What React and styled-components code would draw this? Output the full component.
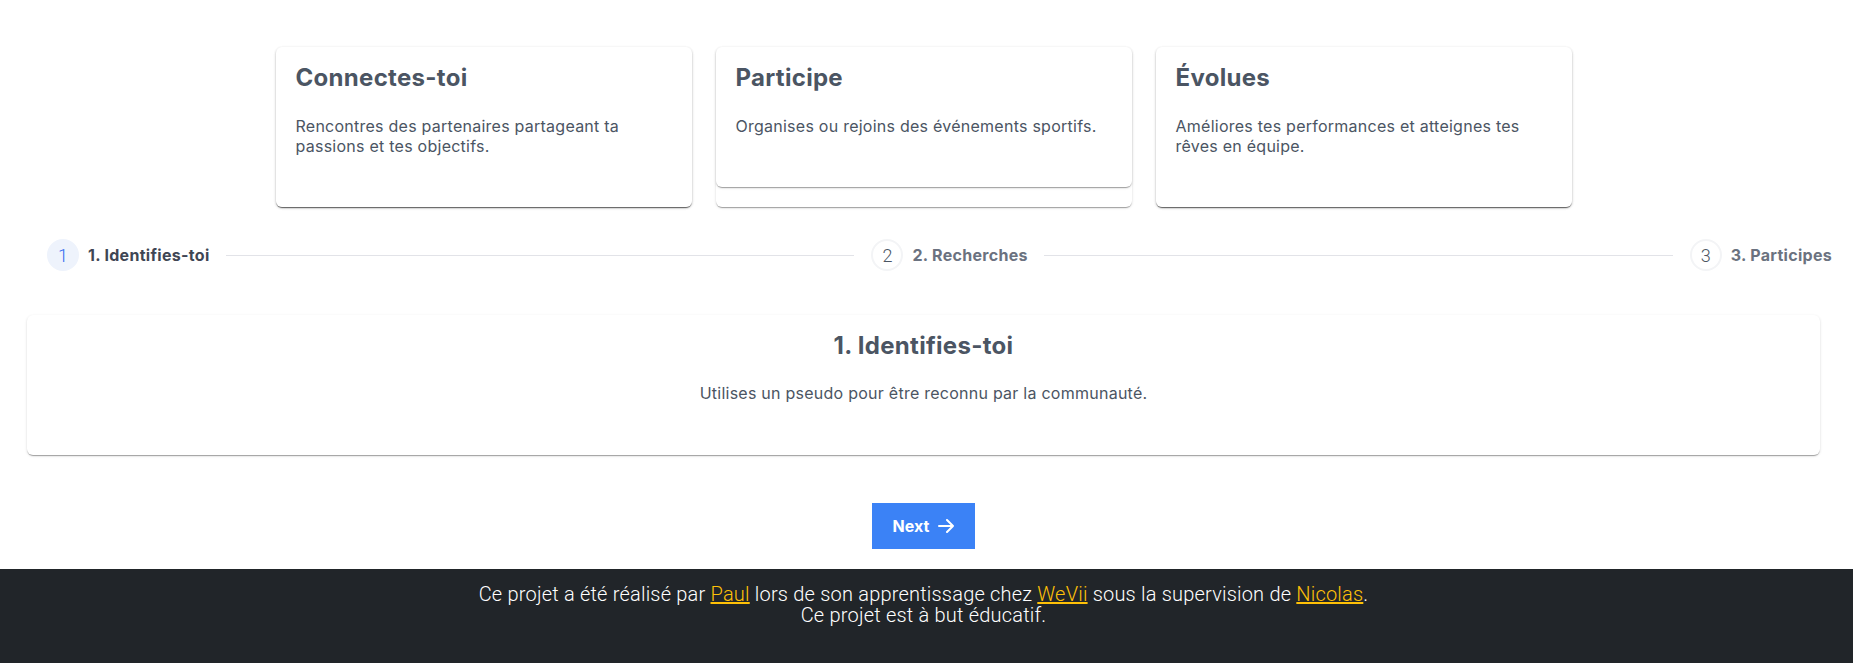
import React from "react";
import styled, { createGlobalStyle } from "styled-components";

const GlobalStyle = createGlobalStyle`
    html, body {
        margin: 0;
        padding: 0;
        background: #ffffff;
    }
    body {
        font-family: Inter, "Noto Sans", sans-serif;
        color: #4b5563;
    }
`;

const Page = styled.div`
    min-height: 100vh;
    display: flex;
    flex-direction: column;
`;

const Main = styled.main`
    flex: 1;
    padding: 47px 33px 20px 27px;
    display: flex;
    flex-direction: column;
`;

const CardsRow = styled.div`
    display: flex;
    justify-content: center;
    align-items: stretch;
    gap: 24px;
`;

const cardShadow = `
    0px 2px 1px -1px rgba(0, 0, 0, 0.2),
    0px 1px 1px 0px rgba(0, 0, 0, 0.14),
    0px 1px 3px 0px rgba(0, 0, 0, 0.12)
`;

const CardOuter = styled.div`
    width: 416px;
    border-radius: 6px;
    background: #fff;
    box-shadow: ${cardShadow};
`;

const CardInner = styled.div`
    border-radius: 6px;
    background: #fff;
    box-shadow: ${cardShadow};
    padding: 16px 20px 51px;
`;

const CardTitle = styled.h2`
    margin: 0;
    font-size: 24px;
    font-weight: 700;
    letter-spacing: 0.3px;
    color: #4b5563;
`;

const CardText = styled.p`
    margin: 24px 0 0;
    font-size: 16px;
    line-height: 20px;
    letter-spacing: 0.25px;
    color: #4b5563;
`;

const Stepper = styled.div`
    display: flex;
    align-items: center;
    margin: 32px -12px 0 20px;
`;

const Step = styled.div`
    display: flex;
    align-items: center;
    gap: 9px;
    flex-shrink: 0;
`;

const StepCircle = styled.span`
    width: 32px;
    height: 32px;
    box-sizing: border-box;
    border-radius: 50%;
    display: flex;
    align-items: center;
    justify-content: center;
    font-family: Roboto, sans-serif;
    font-weight: 300;
    font-size: 18px;
    background: ${(p) => (p.$active ? "#eef3fc" : "#ffffff")};
    border: 2px solid ${(p) => (p.$active ? "#eef3fc" : "#f3f4f6")};
    color: ${(p) => (p.$active ? "#2f6bf0" : "#4b5563")};
`;

const StepLabel = styled.span`
    font-size: 16px;
    font-weight: 700;
    letter-spacing: 0.3px;
    color: ${(p) => (p.$active ? "#3f4654" : "#6b7280")};
`;

const StepLine = styled.div`
    flex: 1;
    height: 1px;
    background: #e2e3e8;
    margin: 0 17px 0 16px;
`;

const Panel = styled.section`
    margin-top: 44px;
    border-radius: 6px;
    background: #fff;
    box-shadow: ${cardShadow};
    padding: 16px 20px 52px;
    text-align: center;
`;

const PanelTitle = styled.h1`
    margin: 0;
    font-size: 24px;
    font-weight: 700;
    letter-spacing: 0.3px;
    color: #4b5563;
`;

const PanelText = styled.p`
    margin: 23px 0 0;
    font-size: 16px;
    line-height: 20px;
    letter-spacing: 0.25px;
    color: #4b5563;
`;

const Actions = styled.div`
    display: flex;
    justify-content: center;
    margin-top: 48px;
`;

const NextButton = styled.button`
    height: 46px;
    padding: 0 21px;
    display: flex;
    align-items: center;
    gap: 9px;
    border: none;
    background: #3b82f6;
    color: #fff;
    font-family: Inter, sans-serif;
    font-size: 16px;
    font-weight: 700;
    cursor: pointer;
`;

const Footer = styled.footer`
    background: #212529;
    color: #fff;
    font-family: Roboto, sans-serif;
    font-weight: 300;
    font-size: 20px;
    line-height: 21px;
    letter-spacing: 0.2px;
    text-align: center;
    padding: 15px 33px 40px 27px;
`;

const FooterLink = styled.a`
    color: #ffc107;
    text-decoration: underline;
`;

const cards = [
    {
        title: "Connectes-toi",
        text: "Rencontres des partenaires partageant ta passions et tes objectifs.",
    },
    {
        title: "Participe",
        text: "Organises ou rejoins des événements sportifs.",
    },
    {
        title: "Évolues",
        text: "Améliores tes performances et atteignes tes rêves en équipe.",
    },
];

const steps = ["1. Identifies-toi", "2. Recherches", "3. Participes"];

const ArrowIcon = () => (
    <svg width="16" height="14" viewBox="0 0 16 14" fill="none">
        <path
            d="M1 7h14M9 1l6 6-6 6"
            stroke="#fff"
            strokeWidth="2"
            strokeLinecap="round"
            strokeLinejoin="round"
        />
    </svg>
);

const App = () => {
    const current = 0;

    return (
        <Page>
            <GlobalStyle />
            <Main>
                <CardsRow>
                    {cards.map((card) => (
                        <CardOuter key={card.title}>
                            <CardInner>
                                <CardTitle>{card.title}</CardTitle>
                                <CardText>{card.text}</CardText>
                            </CardInner>
                        </CardOuter>
                    ))}
                </CardsRow>

                <Stepper>
                    {steps.map((label, i) => (
                        <React.Fragment key={label}>
                            <Step>
                                <StepCircle $active={i === current}>{i + 1}</StepCircle>
                                <StepLabel $active={i === current}>{label}</StepLabel>
                            </Step>
                            {i < steps.length - 1 && <StepLine />}
                        </React.Fragment>
                    ))}
                </Stepper>

                <Panel>
                    <PanelTitle>1. Identifies-toi</PanelTitle>
                    <PanelText>Utilises un pseudo pour être reconnu par la communauté.</PanelText>
                </Panel>

                <Actions>
                    <NextButton type="button">
                        Next
                        <ArrowIcon />
                    </NextButton>
                </Actions>
            </Main>

            <Footer>
                Ce projet a été réalisé par <FooterLink href="#">Paul</FooterLink> lors de son
                apprentissage chez <FooterLink href="#">WeVii</FooterLink> sous la supervision de{" "}
                <FooterLink href="#">Nicolas</FooterLink>.
                <br />
                Ce projet est à but éducatif.
            </Footer>
        </Page>
    );
};

export default App;
